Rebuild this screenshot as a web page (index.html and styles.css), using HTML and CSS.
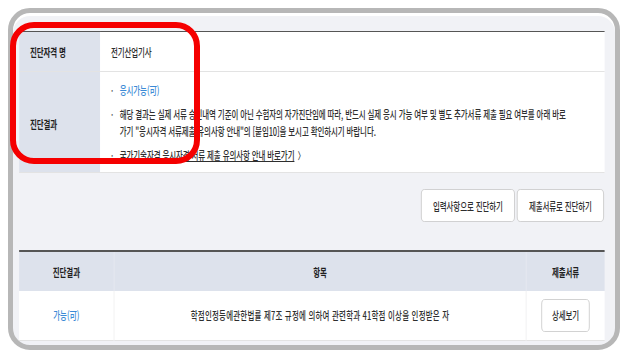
FILE: index.html
```html
<!DOCTYPE html>
<html lang="ko">
<head>
    <meta charset="UTF-8">
    <meta name="viewport" content="width=device-width, initial-scale=1.0">
    <title>응시자격 자가진단 결과</title>
    <link rel="stylesheet" href="styles.css">
</head>
<body>

    <div class="frame">
        <!-- 캡처 화면이 가로로 줄어든 상태라 내용 전체를 가로로만 축소 -->
        <div class="squeeze">

            <!-- 진단 결과 요약 -->
            <table class="info-table">
                <tr class="row-name">
                    <th>진단자격 명</th>
                    <td>전기산업기사</td>
                </tr>
                <tr class="row-result">
                    <th>진단결과</th>
                    <td>
                        <ul class="notes">
                            <li class="ok">응시가능(可)</li>
                            <li>해당 결과는 실제 서류 승인내역 기준이 아닌 수험자의 자가진단임에 따라, 반드시 실제 응시 가능 여부 및 별도 추가서류 제출 필요 여부를 아래 바로<br>가기 "응시자격 서류제출 유의사항 안내"의 [붙임10]을 보시고 확인하시기 바랍니다.</li>
                            <li><a href="#">국가기술자격 응시자격 서류 제출 유의사항 안내 바로가기</a> <span class="arrow">〉</span></li>
                        </ul>
                    </td>
                </tr>
            </table>

            <!-- 버튼 -->
            <div class="actions">
                <button class="btn btn-input">입력사항으로 진단하기</button>
                <button class="btn btn-docs">제출서류로 진단하기</button>
            </div>

            <!-- 상세 목록 -->
            <table class="list-table">
                <thead>
                    <tr>
                        <th class="col-result">진단결과</th>
                        <th class="col-item">항목</th>
                        <th class="col-docs">제출서류</th>
                    </tr>
                </thead>
                <tbody>
                    <tr>
                        <td class="ok">가능(可)</td>
                        <td class="item">학점인정등에관한법률 제7조 규정에 의하여 관련학과 41학점 이상을 인정받은 자</td>
                        <td><button class="btn btn-detail">상세보기</button></td>
                    </tr>
                </tbody>
            </table>

        </div>
    </div>

    <!-- 강조 표시 -->
    <div class="highlight"></div>

</body>
</html>
```

FILE: styles.css
```css
body {
    margin: 0;
    background-color: #fff;
    font-family: "Noto Sans CJK KR", "Noto Sans", sans-serif;
    font-size: 11px;
    font-weight: 500;
    letter-spacing: -0.15px;
    color: #2e2e2e;
}

/* 바깥 테두리 */
.frame {
    box-sizing: border-box;
    width: 612px;
    height: 342px;
    margin: 8px 0 0 8px;
    padding-top: 18px;
    border: 5px solid #b7b7b7;
    border-radius: 22px;
    background-color: #f1f2f6;
    box-shadow: inset 0 3px 0 #fff;
    overflow: hidden;
}

/* 가로 0.68 배 축소 (폭 수치는 모두 축소 전 기준) */
.squeeze {
    box-sizing: border-box;
    width: 885px;
    padding: 0 15px 0 9px;
    transform: scaleX(0.68);
    transform-origin: left top;
}

table {
    width: 100%;
    border-collapse: collapse;
}

th {
    font-weight: bold;
    color: #1f1f1f;
}

.ok {
    color: #3b8ad6;
}

/* 요약 표 */
.info-table {
    border-top: 1px solid #555;
    background-color: #fff;
}

.info-table th {
    width: 119px;
    padding: 0 0 0 16px;
    box-sizing: border-box;
    text-align: left;
    background-color: #dde2ec;
}

.info-table td {
    padding: 0 10px 0 16px;
}

.row-name {
    height: 40px;
    border-bottom: 1px solid #e3e3e3;
}

.row-result {
    border-bottom: 1px solid #e3e3e3;
}

.row-result th {
    padding-top: 4px;
}

.notes {
    list-style: none;
    margin: 0;
    padding: 10px 0 8px;
}

.notes li {
    position: relative;
    padding-left: 13px;
    line-height: 17px;
    margin-top: 7px;
}

.notes li:first-child {
    margin-top: 0;
}

.notes li::before {
    content: "·";
    position: absolute;
    left: 0;
    color: #555;
}

.notes a {
    color: #2e2e2e;
    text-decoration: underline;
}

.arrow {
    margin-left: 2px;
    font-size: 10px;
}

/* 버튼 */
.actions {
    display: flex;
    justify-content: flex-end;
    gap: 3px;
    margin: 16px 1px 28px 0;
}

.btn {
    height: 33px;
    background-color: #fff;
    border: 1px solid #c9c9c9;
    border-radius: 5px;
    font-family: inherit;
    font-size: 11px;
    font-weight: 500;
    letter-spacing: -0.15px;
    color: #2e2e2e;
    cursor: pointer;
    padding: 0;
}

.btn-input { width: 138px; }
.btn-docs { width: 128px; }
.btn-detail { width: 71px; }

/* 상세 목록 */
.list-table {
    border-top: 2px solid #555;
    text-align: center;
}

.list-table thead tr {
    height: 40px;
    background-color: #dde2ec;
}

.list-table .col-result { width: 137px; }
.list-table .col-docs { width: 113px; }

.list-table th + th {
    border-left: 1px solid #e6e9f0;
}

.list-table tbody tr {
    height: 49px;
    background-color: #fff;
    border-bottom: 1px solid #e3e3e3;
}

.list-table td + td {
    border-left: 1px solid #eee;
}

.list-table .item {
    letter-spacing: 0.3px;
}

/* 빨간 강조 박스 */
.highlight {
    position: absolute;
    left: 10px;
    top: 22px;
    width: 190px;
    height: 142px;
    box-sizing: border-box;
    border: 6px solid #f50000;
    border-radius: 24px;
}
```
